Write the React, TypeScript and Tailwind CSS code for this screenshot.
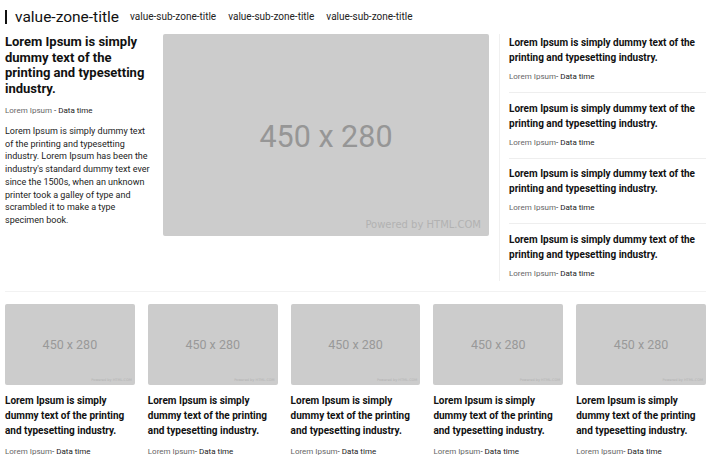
import React from "react";

const font = { fontFamily: "Roboto, 'Liberation Sans', sans-serif" };

function Placeholder({ big }: { big?: boolean }) {
  return (
    <div className="relative flex h-full w-full items-center justify-center rounded-[2px] bg-[#cccccc]">
      <span
        className={
          big
            ? "mt-[4px] text-[30.5px] text-[#969696]"
            : "mt-[1px] text-[12.5px] text-[#999999]"
        }
        style={{ fontFamily: "Roboto, 'Liberation Sans', sans-serif" }}
      >
        450 x 280
      </span>
      <span
        className={
          big
            ? "absolute bottom-[4px] right-[8px] text-[10px] text-[#b2b2b2]"
            : "absolute bottom-[2px] right-[3px] text-[3.5px] text-[#b2b2b2]"
        }
        style={{ fontFamily: "'DejaVu Sans', sans-serif" }}
      >
        Powered by HTML.COM
      </span>
    </div>
  );
}

function Meta() {
  return (
    <div className="text-[8px] leading-[10px]">
      <span className="text-[#666]">Lorem Ipsum</span>
      <span className="text-[#222]">- Data time</span>
    </div>
  );
}

export default function App() {
  const rightItems = [0, 1, 2, 3];
  const cards = [0, 1, 2, 3, 4];
  return (
    <div className="w-[711px] bg-white px-[5px] text-[#111]" style={font}>
      {/* header */}
      <div className="flex h-[34px] items-center pb-[1px]">
        <div className="h-[14px] w-[2px] bg-[#111]" />
        <div className="ml-[8px] text-[15.5px] leading-[18px] text-[#111]">value-zone-title</div>
        <div className="ml-[11px] flex gap-[12px] text-[10px] text-[#222]">
          <span>value-sub-zone-title</span>
          <span>value-sub-zone-title</span>
          <span>value-sub-zone-title</span>
        </div>
      </div>

      {/* top row */}
      <div className="flex h-[247px]">
        <div className="w-[146px] shrink-0">
          <h2 className="text-[13px] font-bold leading-[15.5px] text-[#111]">
            Lorem Ipsum is simply dummy text of the printing and typesetting industry.
          </h2>
          <div className="mt-[10px]">
            <div className="text-[8px] leading-[10px]">
              <span className="text-[#666]">Lorem Ipsum</span>
              <span className="text-[#222]"> - Data time</span>
            </div>
          </div>
          <p className="mt-[9px] text-[9px] leading-[12.7px] text-[#222]">
            Lorem Ipsum is simply dummy text of the printing and typesetting industry. Lorem
            Ipsum has been the industry's standard dummy text ever since the 1500s, when an
            unknown printer took a galley of type and scrambled it to make a type specimen book.
          </p>
        </div>
        <div className="ml-[12px] h-[202px] w-[326px] shrink-0">
          <Placeholder big />
        </div>
        <div className="ml-[10px] flex-1 border-l border-[#f0f0f0] pl-[9px]">
          {rightItems.map((i) => (
            <div
              key={i}
              className={
                i === 0
                  ? "border-b border-[#eeeeee] pb-[10px] pt-[1px]"
                  : i === 3
                  ? "pt-[7.5px]"
                  : "border-b border-[#eeeeee] pb-[10px] pt-[7.5px]"
              }
            >
              <div className="text-[10px] font-bold leading-[15px] text-[#111]">
                Lorem Ipsum is simply dummy text of the printing and typesetting industry.
              </div>
              <div className="mt-[7px]">
                <Meta />
              </div>
            </div>
          ))}
        </div>
      </div>

      {/* separator */}
      <div className="mt-[10px] border-t border-[#f2f2f2]" />

      {/* bottom cards */}
      <div className="mt-[12px] grid grid-cols-5 gap-[13px]">
        {cards.map((i) => (
          <div key={i}>
            <div className="h-[81px]">
              <Placeholder />
            </div>
            <div className="mt-[8px] pr-[4px] text-[10px] font-bold leading-[15px] text-[#111]">
              Lorem Ipsum is simply dummy text of the printing and typesetting industry.
            </div>
            <div className="mt-[9px]">
              <Meta />
            </div>
          </div>
        ))}
      </div>
    </div>
  );
}
